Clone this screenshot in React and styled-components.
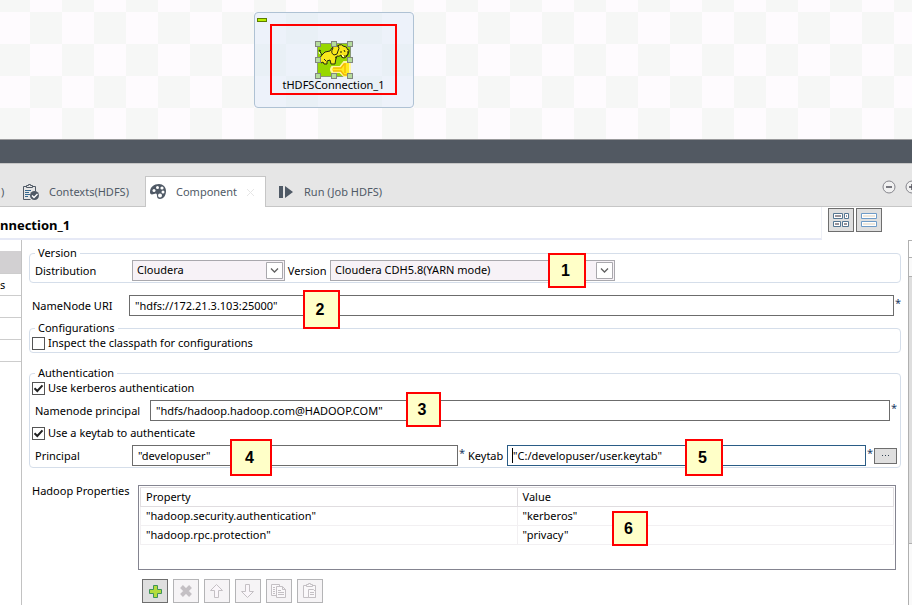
import React from "react";
import styled, { createGlobalStyle } from "styled-components";

const GlobalStyle = createGlobalStyle`
  *, *::before, *::after { box-sizing: border-box; }
  body {
    margin: 0;
    background: #fff;
    color: #000;
    font: 11px/16px "Noto Sans", "Open Sans", sans-serif;
  }
  button, input, select { font: inherit; color: inherit; margin: 0; }
`;

const Page = styled.div`
  display: flex;
  flex-direction: column;
  height: 100vh;
  overflow: hidden;
`;

const Canvas = styled.section`
  position: relative;
  flex: none;
  height: 140px;
  border-bottom: 1px solid #9a9a9c;
  background: conic-gradient(#fefbfe 25%, #f6f7f6 0 50%, #fefbfe 0 75%, #f6f7f6 0) 30px 12px / 64px 64px;
`;

const SubJob = styled.div`
  position: absolute;
  left: 254px;
  top: 12px;
  width: 160px;
  height: 96px;
  padding: 11px 15px;
  border: 1px solid #afc2d4;
  border-radius: 4px;
  background: rgba(220, 234, 246, 0.5);
`;

const Collapse = styled.button`
  position: absolute;
  left: 2px;
  top: 5px;
  width: 10px;
  height: 4px;
  padding: 0;
  border: 1px solid #5d7d00;
  background: #b8f000;
`;

const Highlight = styled.div`
  display: flex;
  flex-direction: column;
  align-items: center;
  width: 127px;
  height: 71px;
  padding-top: 15px;
  border: 2px solid #f00;
  white-space: nowrap;
  line-height: 12px;
`;

const Sash = styled.div`
  flex: none;
  height: 23px;
  background: #525962;
`;

const TabStrip = styled.div`
  display: flex;
  flex: none;
  align-items: flex-end;
  height: 44px;
  border-top: 1px solid #c6c6c6;
  border-bottom: 1px solid #c6c6c6;
  background: #e6e6e6;
  color: #505a66;
`;

const Tab = styled.button`
  display: flex;
  flex: none;
  align-items: center;
  gap: 9px;
  width: ${(p) => p.$width}px;
  height: 31px;
  margin-bottom: -1px;
  padding: 0 0 0 ${(p) => p.$pad}px;
  border: 1px solid ${(p) => (p.$active ? "#c6c6c6" : "transparent")};
  border-bottom: 0;
  background: ${(p) => (p.$active ? "#fff" : "transparent")};
  white-space: nowrap;
  svg { flex: none; }
`;

const TabTools = styled.div`
  display: flex;
  flex: none;
  gap: 9px;
  width: 30px;
  height: 26px;
  margin-left: auto;
  overflow: hidden;
`;

const RoundButton = styled.button`
  flex: none;
  width: 14px;
  height: 14px;
  padding: 0;
  border: 0;
  background: none;
  svg { display: block; }
`;

const Header = styled.header`
  display: flex;
  flex: none;
  height: 33px;
`;

const Title = styled.h1`
  flex: 1;
  margin: 0;
  padding-top: 8px;
  border-right: 1px solid #eef0f6;
  border-bottom: 2px solid #e6e9f6;
  font-size: 13px;
  line-height: 20px;
`;

const HeaderTools = styled.div`
  display: flex;
  gap: 2px;
  width: 90px;
  padding: 1px 0 0 6px;
`;

const IconButton = styled.button`
  display: flex;
  align-items: center;
  justify-content: center;
  width: 26px;
  height: 24px;
  padding: 0;
  border: 1px solid #6e6e6e;
  background: #dfdfdf;
  &:disabled { border-color: #b4b4b6; background: #f6f4f6; }
`;

const Body = styled.div`
  display: flex;
  flex: 1;
  min-height: 0;
`;

const Nav = styled.nav`
  flex: none;
  width: 22px;
  padding-top: 11px;
  border-right: 1px solid #c2c2c2;
`;

const NavItem = styled.button`
  display: block;
  width: 100%;
  height: ${(p) => (p.$active ? 23 : 22)}px;
  padding: 0;
  border: 0;
  border-bottom: 1px solid #cdcdcd;
  background: ${(p) => (p.$active ? "#d2d0d2" : "#fff")};
  text-align: left;
`;

const Form = styled.form`
  flex: 1;
  min-width: 0;
  padding: 6px 7px 0;
`;

const Group = styled.fieldset`
  display: block;
  min-width: 0;
  margin: 0 0 ${(p) => p.$after}px;
  padding: 0 3px 1px 2px;
  border: 1px solid #d5deea;
  border-radius: 4px;
`;

const Legend = styled.legend`
  margin-left: 3px;
  padding: 0 3px;
  line-height: 14px;
`;

const Stack = styled.div`
  display: flex;
  flex-direction: column;
  gap: 4px;
`;

const Row = styled.div`
  position: relative;
  display: flex;
  align-items: center;
  height: 21px;
  padding-left: 3px;
  margin-bottom: ${(p) => p.$after || 0}px;
  white-space: nowrap;
`;

const Label = styled.label`
  flex: none;
  width: ${(p) => p.$width}px;
`;

const SelectBox = styled.span`
  position: relative;
  width: ${(p) => p.$width}px;
  height: 21px;
  svg { position: absolute; right: 1px; top: 1px; pointer-events: none; }
`;

const Select = styled.select`
  appearance: none;
  display: block;
  width: 100%;
  height: 21px;
  padding: 0 20px 1px 4px;
  border: 1px solid #a9a8ad;
  border-radius: 0;
  background: #f7f2f7;
`;

const Field = styled.input`
  flex: 1;
  min-width: 0;
  height: 21px;
  padding: 0 5px;
  border: 1px solid ${(p) => (p.$focused ? "#2a5c86" : "#6c6c6c")};
  background: #fff;
  outline: 0;
`;

const Caret = styled.span`
  position: absolute;
  left: 5px;
  top: 3px;
  width: 1px;
  height: 15px;
  background: #000;
`;

const FieldBox = styled.span`
  position: relative;
  display: flex;
  flex: ${(p) => p.$grow} 1 0;
  min-width: 0;
`;

const Star = styled.span`
  flex: none;
  align-self: flex-start;
  width: ${(p) => p.$width || 7}px;
  padding-left: 1px;
  color: #1c3c64;
`;

const Check = styled.label`
  display: flex;
  align-items: center;
  gap: 3px;
  height: 16px;
`;

const Tick = styled.input`
  appearance: none;
  flex: none;
  width: 13px;
  height: 13px;
  border: 1px solid #555;
  background: #fff;
  &:checked {
    background: url("data:image/svg+xml,%3Csvg xmlns='http://www.w3.org/2000/svg' viewBox='0 0 11 11'%3E%3Cpath d='M1.5 5.2 4.3 8 9.5 2.3' fill='none' stroke='%23222' stroke-width='2'/%3E%3C/svg%3E");
  }
`;

const MoreButton = styled.button`
  display: flex;
  align-items: center;
  justify-content: center;
  width: 23px;
  height: 16px;
  padding: 0;
  border: 1px solid #6e6e6e;
  background: #dfdfdf;
  svg { display: block; }
`;

const Callout = styled.span`
  position: absolute;
  left: ${(p) => p.$x}px;
  top: ${(p) => p.$y}px;
  display: flex;
  align-items: center;
  justify-content: center;
  width: ${(p) => p.$w}px;
  height: ${(p) => p.$h}px;
  padding-right: 3px;
  border: 2px solid #f00;
  background: #ffffc8;
  font: 700 16px/20px "Liberation Sans", sans-serif;
`;

const Properties = styled.section`
  display: flex;
  margin: 17px 5px 9px 3px;
`;

const PropertiesLabel = styled.span`
  flex: none;
  width: 106px;
  margin-top: -2px;
  white-space: nowrap;
`;

const TableBox = styled.div`
  position: relative;
  flex: 1;
  height: 85px;
  padding: 1px;
  border: 1px solid #848490;
`;

const Table = styled.table`
  width: 100%;
  table-layout: fixed;
  border-collapse: collapse;
  th, td {
    height: 19px;
    padding: 0 5px;
    border: 1px solid #f2f0f2;
    font-weight: 400;
    line-height: 16px;
    text-align: left;
  }
  th { border-color: #e0dde0; }
`;

const Toolbar = styled.div`
  display: flex;
  gap: 5px;
  padding-left: 113px;
`;

const Scroll = styled.div`
  flex: none;
  width: 4px;
  border-left: 1px solid #b0b0b0;
  background: #fafafa;
`;

const ScrollUp = styled.div`
  height: 18px;
  border-top: 1px solid #b0b0b0;
  border-bottom: 1px solid #b0b0b0;
  background: #fff;
`;

const ScrollThumb = styled.div`
  height: 268px;
  margin-top: 18px;
  border: 1px solid #b0b0b0;
  border-width: 1px 0;
  background: #dedede;
`;

const Elephant = () => (
  <svg width="38" height="38" viewBox="0 0 38 38">
    <rect x="2.5" y="2.5" width="33" height="33" fill="#97d700" stroke="#8a9a78" />
    <path d="M17 26h8l4-5h6v14h-6l-4-4h-8q-2-2.500 0-5z" fill="#ffec20" stroke="#fff6a0" strokeWidth="2" />
    <path d="M18 27h8l3-4h2m-13 7h8l3 4h3M30 24v8" fill="none" stroke="#f5b800" strokeWidth="1.300" />
    <path d="M7 14q2-4 8-4l2-3q2-3 6-2l1-1q3-1 4 1 4 0 5 4 1-1 1 1-1 6-5 7-3 0-3-3-2 2-4 1l-1 2-1 6h-4l-1-4-3 1v3H9l-1-2-2 1q-3-4 1-8z" fill="#f8e71c" stroke="#242a10" />
    <path d="M18 7q-3 5 1 7 4 0 4-4 2-3 0-5M7 14 4 9l2 1m3 8 2 2m9-4 2 1m4-7v2m3-3 1 2m-1 4q4 1 4-5" fill="none" stroke="#242a10" />
    <path d="M4 11l1 2m22 1 2 2" stroke="#fff" />
    <g fill="#b5dc9c" stroke="#82877f">
      {[[0, 0], [16, 0], [32, 0], [0, 16], [32, 16], [0, 32], [16, 32], [32, 32]].map(([x, y]) => (
        <rect key={`${x}-${y}`} x={x + 0.5} y={y + 0.5} width="5" height="5" />
      ))}
    </g>
  </svg>
);

const ContextsIcon = () => (
  <svg width="17" height="17" viewBox="0 0 17 17">
    <path d="M3.5 2.5h-3v13h7M9.5 2.5h3v5" fill="none" stroke="#505a66" />
    <path d="M3.5 3.5v-2h2v-1h2v1h2v2z" fill="none" stroke="#505a66" />
    <path d="M2 6.5h6M2 8.5h4M2 10.5h5M2 12.5h3" stroke="#35688f" />
    <circle cx="11.5" cy="11.5" r="4.5" fill="#505a66" />
    <path d="m9 11.5 2 2 3.5-3.5" fill="none" stroke="#fff" strokeWidth="1.4" />
  </svg>
);

const PaletteIcon = () => (
  <svg width="17" height="16" viewBox="0 0 17 16">
    <path d="M9 0c4 0 7 3 7 7 0 5-3 8-6 8-2 0-3-1-3-3 0-3-1-3-3-2-3 1-4 0-4-2C0 3 4 0 9 0z" fill="#505a66" />
    <g fill="#fff">
      <circle cx="4" cy="6.5" r="1.5" />
      <circle cx="7.5" cy="3.5" r="1.5" />
      <circle cx="12" cy="4" r="1.6" />
      <circle cx="13" cy="8" r="1.5" />
      <circle cx="10" cy="11.5" r="2" />
    </g>
  </svg>
);

const RunIcon = () => (
  <svg width="16" height="12" viewBox="0 0 16 12">
    <path d="M0 0h4v12H0zM6 0l8 6-8 6z" fill="#505a66" />
  </svg>
);

const CloseMark = () => (
  <svg width="9" height="9" viewBox="0 0 9 9">
    <path d="m1 1 7 7m0-7L1 8" stroke="#e6e6e6" />
  </svg>
);

const CircleIcon = ({ plus }) => (
  <svg width="14" height="14" viewBox="0 0 14 14">
    <circle cx="7" cy="7" r="6" fill="#f1f1f1" stroke="#85858c" />
    <path d={plus ? "M4 7h6M7 4v6" : "M4 7h6"} stroke="#50505a" strokeWidth="1.5" />
  </svg>
);

const GridIcon = () => (
  <svg width="16" height="14" viewBox="0 0 16 14">
    <g fill="#fff" stroke="#557692">
      <path d="M.5.5h9v5h-9zM11.5.5h4v5h-4zM.5 8.5h7v5h-7zM9.500 8.500h6v5h-6z" />
    </g>
    <path d="M2 2h6v2H2zM13 2h1v2h-1zM2 10h4v2H2zM11 10h3v2h-3z" fill="#9a949a" />
  </svg>
);

const ListIcon = () => (
  <svg width="16" height="14" viewBox="0 0 16 14">
    <path d="M.5.5h15v5H.5zM.5 8.500h15v5H.5z" fill="#fff" stroke="#6f9cc8" />
    <path d="M2 2h12v2H2zM2 10h12v2H2z" fill="#eee8de" />
  </svg>
);

const ArrowBox = () => (
  <svg width="18" height="19" viewBox="0 0 18 19">
    <path d="M.5 1.500h16v16H.5z" fill="#fff" stroke="#a9a8ad" />
    <path d="m5 7.500 3.500 3.500L12 7.500" fill="none" stroke="#606060" strokeWidth="1.300" />
  </svg>
);

const PlusIcon = () => (
  <svg width="13" height="13" viewBox="0 0 13 13">
    <path d="M4.500.5h4v4h4v4h-4v4h-4v-4h-4v-4h4z" fill="#b4dc3c" stroke="#3f9358" />
  </svg>
);

const CrossIcon = () => (
  <svg width="14" height="14" viewBox="0 0 14 14">
    <path d="m2.500 2.500 9 9m0-9-9 9" stroke="#c4c0c4" strokeWidth="4" />
  </svg>
);

const ArrowIcon = ({ down }) => (
  <svg width="14" height="16" viewBox="0 0 14 16">
    <path d={down ? "M4.500 1.500h4v7h4l-6 6-6-6h4z" : "M6.500 1.500l6 6h-4v7h-4v-7h-4z"} fill="#faf6fa" stroke="#c4c0c4" />
  </svg>
);

const CopyIcon = () => (
  <svg width="16" height="16" viewBox="0 0 16 16">
    <g fill="#faf8fa" stroke="#c4c0c4">
      <path d="M.5 1.500h8v11h-8z" />
      <path d="M5.500 3.500h6l3 3v8h-9zM11.500 3.500v3h3M7 7.500h3M7 9.500h6M7 11.500h6M2 4.500h2M2 6.500h2M2 8.500h2M2 10.500h2" />
    </g>
  </svg>
);

const PasteIcon = () => (
  <svg width="14" height="16" viewBox="0 0 14 16">
    <g fill="#faf8fa" stroke="#c4c0c4">
      <path d="M.5 2.500h12v12H.5z" />
      <path d="M3.500 3.500v-2h2v-1h2v1h2v2zM5.500 6.500h5l2 2v6h-7zM7 9.500h4M7 11.500h4" />
    </g>
  </svg>
);

const DotsIcon = () => (
  <svg width="9" height="3" viewBox="0 0 9 3">
    <path d="M1 1h1v1H1zM4 1h1v1H4zM7 1h1v1H7z" fill="#345" />
  </svg>
);

const rows = [
  ['"hadoop.security.authentication"', '"kerberos"'],
  ['"hadoop.rpc.protection"', '"privacy"'],
];

const CheckRow = ({ children, checked }) => (
  <Check>
    <Tick type="checkbox" defaultChecked={checked} />
    {children}
  </Check>
);

const DropDown = ({ id, width, value }) => (
  <SelectBox $width={width}>
    <Select id={id} defaultValue={value}>
      <option>{value}</option>
    </Select>
    <ArrowBox />
  </SelectBox>
);

export default function App() {
  return (
    <Page>
      <GlobalStyle />
      <Canvas>
        <SubJob>
          <Collapse aria-label="Collapse" />
          <Highlight>
            <Elephant />
            tHDFSConnection_1
          </Highlight>
        </SubJob>
      </Canvas>
      <Sash />
      <TabStrip>
        <Tab $width={22} $pad={0}>)</Tab>
        <Tab $width={123} $pad={0}><ContextsIcon />Contexts(HDFS)</Tab>
        <Tab $width={121} $pad={4} $active><PaletteIcon />Component<CloseMark /></Tab>
        <Tab $width={140} $pad={12}><RunIcon />Run (Job HDFS)</Tab>
        <TabTools>
          <RoundButton aria-label="Minimize"><CircleIcon /></RoundButton>
          <RoundButton aria-label="Maximize"><CircleIcon plus /></RoundButton>
        </TabTools>
      </TabStrip>
      <Header>
        <Title>nnection_1</Title>
        <HeaderTools>
          <IconButton aria-label="Grid layout"><GridIcon /></IconButton>
          <IconButton aria-label="List layout"><ListIcon /></IconButton>
        </HeaderTools>
      </Header>
      <Body>
        <Nav>
          <NavItem $active aria-label="Basic settings" />
          <NavItem>s</NavItem>
          <NavItem aria-label="Dynamic settings" />
          <NavItem aria-label="View" />
          <NavItem aria-label="Documentation" />
        </Nav>
        <Form>
          <Group $after={12}>
            <Legend>Version</Legend>
            <Row>
              <Label $width={97} htmlFor="distribution">Distribution</Label>
              <DropDown id="distribution" width={153} value="Cloudera" />
              <Label $width={45} htmlFor="version">&nbsp;Version</Label>
              <DropDown id="version" width={285} value="Cloudera CDH5.8(YARN mode)" />
              <Callout $x={516} $y={-7} $w={38} $h={35}>1</Callout>
            </Row>
          </Group>
          <Row $after={5}>
            <Label $width={97} htmlFor="uri">NameNode URI</Label>
            <Field id="uri" defaultValue={'"hdfs://172.21.3.103:25000"'} />
            <Star>*</Star>
            <Callout $x={274} $y={-5} $w={37} $h={39}>2</Callout>
          </Row>
          <Group $after={13}>
            <Legend>Configurations</Legend>
            <CheckRow>Inspect the classpath for configurations</CheckRow>
          </Group>
          <Group $after={0}>
            <Legend>Authentication</Legend>
            <Stack>
              <CheckRow checked>Use kerberos authentication</CheckRow>
              <Row>
                <Label $width={115} htmlFor="namenode">Namenode principal</Label>
                <Field id="namenode" defaultValue={'"hdfs/hadoop.hadoop.com@HADOOP.COM"'} />
                <Star>*</Star>
                <Callout $x={374} $y={-8} $w={35} $h={35}>3</Callout>
              </Row>
              <CheckRow checked>Use a keytab to authenticate</CheckRow>
              <Row>
                <Label $width={97} htmlFor="principal">Principal</Label>
                <FieldBox $grow={326}>
                  <Field id="principal" defaultValue={'"developuser"'} />
                </FieldBox>
                <Star $width={10}>*</Star>
                <Label $width={39} htmlFor="keytab">Keytab</Label>
                <FieldBox $grow={359}>
                  <Field id="keytab" $focused defaultValue={'"C:/developuser/user.keytab"'} />
                  <Caret />
                </FieldBox>
                <Star $width={8}>*</Star>
                <MoreButton type="button" aria-label="Browse"><DotsIcon /></MoreButton>
                <Callout $x={198} $y={-6} $w={42} $h={37}>4</Callout>
                <Callout $x={653} $y={-6} $w={38} $h={37}>5</Callout>
              </Row>
            </Stack>
          </Group>
          <Properties>
            <PropertiesLabel>Hadoop Properties</PropertiesLabel>
            <TableBox>
              <Table>
                <thead>
                  <tr><th>Property</th><th>Value</th></tr>
                </thead>
                <tbody>
                  {rows.map(([name, value]) => (
                    <tr key={name}><td>{name}</td><td>{value}</td></tr>
                  ))}
                </tbody>
              </Table>
              <Callout $x={473} $y={25} $w={36} $h={35}>6</Callout>
            </TableBox>
          </Properties>
          <Toolbar>
            <IconButton type="button" aria-label="Add"><PlusIcon /></IconButton>
            <IconButton type="button" aria-label="Remove" disabled><CrossIcon /></IconButton>
            <IconButton type="button" aria-label="Move up" disabled><ArrowIcon /></IconButton>
            <IconButton type="button" aria-label="Move down" disabled><ArrowIcon down /></IconButton>
            <IconButton type="button" aria-label="Copy" disabled><CopyIcon /></IconButton>
            <IconButton type="button" aria-label="Paste" disabled><PasteIcon /></IconButton>
          </Toolbar>
        </Form>
        <Scroll>
          <ScrollUp />
          <ScrollThumb />
        </Scroll>
      </Body>
    </Page>
  );
}
